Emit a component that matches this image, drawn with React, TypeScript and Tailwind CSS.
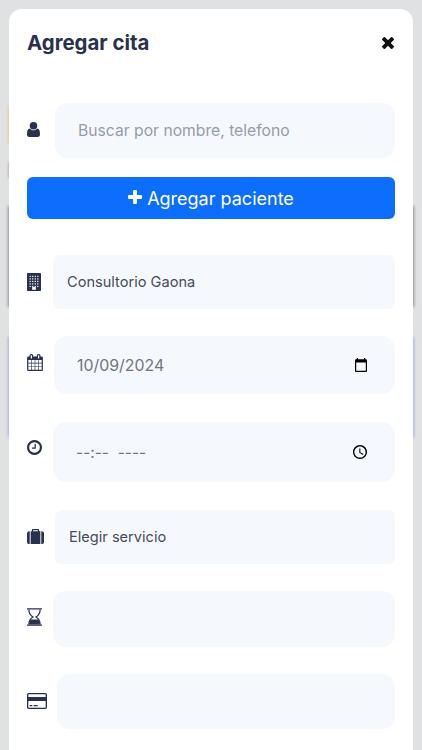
import React from 'react';
import clsx from 'clsx';

type IconProps = { className?: string };

function UserIcon({ className }: IconProps) {
  return (
    <svg viewBox="0 0 13 15" fill="currentColor" className={className}>
      <path d="M2.9 6.4C3.8 7.6 5.1 8.2 6.500 8.200s2.700-.6 3.600-1.800C12.300 6.600 13 8.600 13 12.200 13 14 12.100 15 10.700 15H2.300C.9 15 0 14 0 12.200 0 8.600.7 6.600 2.900 6.400z" />
      <circle cx="6.5" cy="3.8" r="3.8" />
    </svg>
  );
}

function PlusIcon({ className }: IconProps) {
  return (
    <svg viewBox="192 128 1408 1408" fill="currentColor" className={className}>
      <path d="M1600 736v192q0 40-28 68t-68 28h-416v416q0 40-28 68t-68 28h-192q-40 0-68-28t-28-68v-416h-416q-40 0-68-28t-28-68v-192q0-40 28-68t68-28h416v-416q0-40 28-68t68-28h192q40 0 68 28t28 68v416h416q40 0 68 28t28 68z" />
    </svg>
  );
}

function CloseIcon({ className }: IconProps) {
  return (
    <svg viewBox="302 366 1188 1188" fill="currentColor" className={className}>
      <path d="M1490 1322q0 40-28 68l-136 136q-28 28-68 28t-68-28l-294-294-294 294q-28 28-68 28t-68-28l-136-136q-28-28-28-68t28-68l294-294-294-294q-28-28-28-68t28-68l136-136q28-28 68-28t68 28l294 294 294-294q28-28 68-28t68 28l136 136q28 28 28 68t-28 68l-294 294 294 294q28 28 28 68z" />
    </svg>
  );
}

function BuildingIcon({ className }: IconProps) {
  const rows = [256, 512, 768, 1024, 1280];
  const cols = [256, 512, 768, 1024];
  return (
    <svg viewBox="0 0 1408 1792" className={className}>
      <rect width="1408" height="1792" rx="64" fill="currentColor" />
      {rows.map((y) =>
        cols.map((x) => (
          <rect key={`${x}-${y}`} x={x} y={y} width="128" height="128" rx="32" fill="#fff" />
        ))
      )}
      <rect x="512" y="1408" width="384" height="256" rx="32" fill="#fff" />
    </svg>
  );
}

function CalendarIcon({ className }: IconProps) {
  return (
    <svg viewBox="64 0 1664 1792" fill="currentColor" className={className}>
      <path d="M192 1664h288v-288h-288v288zm352 0h320v-288h-320v288zm-352-352h288v-320h-288v320zm352 0h320v-320h-320v320zm-352-384h288v-288h-288v288zm736 736h320v-288h-320v288zm-384-736h320v-288h-320v288zm768 736h288v-288h-288v288zm-384-352h320v-320h-320v320zm-352-864v-288q0-13-9.5-22.5t-22.5-9.5h-64q-13 0-22.5 9.5t-9.5 22.5v288q0 13 9.5 22.5t22.5 9.5h64q13 0 22.5-9.5t9.5-22.5zm736 864h288v-320h-288v320zm-384-384h320v-288h-320v288zm384 0h288v-288h-288v288zm32-480v-288q0-13-9.5-22.5t-22.5-9.5h-64q-13 0-22.5 9.5t-9.5 22.5v288q0 13 9.5 22.5t22.5 9.5h64q13 0 22.5-9.5t9.5-22.5zm384-64v1280q0 52-38 90t-90 38h-1408q-52 0-90-38t-38-90v-1280q0-52 38-90t90-38h128v-96q0-66 47-113t113-47h64q66 0 113 47t47 113v96h384v-96q0-66 47-113t113-47h64q66 0 113 47t47 113v96h128q52 0 90 38t38 90z" />
    </svg>
  );
}

function ClockIcon({ className }: IconProps) {
  return (
    <svg viewBox="128 128 1536 1536" fill="currentColor" className={className}>
      <path d="M1024 544v448q0 14-9 23t-23 9h-320q-14 0-23-9t-9-23v-64q0-14 9-23t23-9h224v-352q0-14 9-23t23-9h64q14 0 23 9t9 23zm416 352q0-148-73-273t-198-198-273-73-273 73-198 198-73 273 73 273 198 198 273 73 273-73 198-198 73-273zm224 0q0 209-103 385.5t-279.5 279.5-385.5 103-385.5-103-279.5-279.5-103-385.5 103-385.5 279.5-279.5 385.5-103 385.5 103 279.5 279.5 103 385.5z" />
    </svg>
  );
}

function SuitcaseIcon({ className }: IconProps) {
  return (
    <svg viewBox="0 0 1792 1664" fill="currentColor" preserveAspectRatio="none" className={className}>
      <path d="M640 256h512v-128h-512v128zm-352 0v1408h-64q-92 0-158-66t-66-158v-960q0-92 66-158t158-66h64zm1120 0v1408h-1024v-1408h128v-160q0-40 28-68t68-28h576q40 0 68 28t28 68v160h128zm384 224v960q0 92-66 158t-158 66h-64v-1408h64q92 0 158 66t66 158z" />
    </svg>
  );
}

function HourglassIcon({ className }: IconProps) {
  return (
    <svg viewBox="0 0 1536 1792" className={className}>
      <path
        d="M192 128C192 520 400 770 610 896C400 1022 192 1272 192 1664M1344 128C1344 520 1136 770 926 896C1136 1022 1344 1272 1344 1664"
        fill="none"
        stroke="currentColor"
        strokeWidth="128"
      />
      <path d="M380 1152h776q130 200 188 512h-1152q58-312 188-512z" fill="currentColor" />
      <rect width="1536" height="140" rx="32" fill="currentColor" />
      <rect y="1652" width="1536" height="140" rx="32" fill="currentColor" />
    </svg>
  );
}

function CreditCardIcon({ className }: IconProps) {
  return (
    <svg viewBox="0 0 1920 1536" fill="currentColor" className={className}>
      <path
        fillRule="evenodd"
        d="M160 0h1600q66 0 113 47t47 113v1216q0 66-47 113t-113 47h-1600q-66 0-113-47t-47-113v-1216q0-66 47-113t113-47zM160 128q-13 0-22.5 9.5t-9.5 22.5v224h1664v-224q0-13-9.5-22.5t-22.5-9.5zM128 768v608q0 13 9.5 22.5t22.5 9.5h1600q13 0 22.5-9.5t9.5-22.5v-608z"
      />
      <path d="M256 1152h256v128h-256zM640 1152h384v128h-384z" />
    </svg>
  );
}

function DatePickerIcon({ className }: IconProps) {
  return (
    <svg viewBox="2 1 20 22" fill="currentColor" preserveAspectRatio="none" className={className}>
      <path d="M20 3h-1V1h-2v2H7V1H5v2H4c-1.1 0-2 .9-2 2v16c0 1.1.9 2 2 2h16c1.1 0 2-.9 2-2V5c0-1.1-.9-2-2-2zm0 18H4V8h16v13z" />
    </svg>
  );
}

function TimePickerIcon({ className }: IconProps) {
  return (
    <svg viewBox="2 2 20 20" fill="currentColor" className={className}>
      <path d="M11.99 2C6.47 2 2 6.48 2 12s4.47 10 9.99 10C17.52 22 22 17.52 22 12S17.52 2 11.99 2zM12 20c-4.42 0-8-3.58-8-8s3.58-8 8-8 8 3.58 8 8-3.58 8-8 8zm.5-13H11v6l5.25 3.15.75-1.23-4.5-2.67z" />
    </svg>
  );
}

type FieldProps = {
  icon: React.ReactNode;
  // Width of the icon column, including the gap before the box
  iconClass: string;
  boxClass: string;
  className?: string;
  children?: React.ReactNode;
};

function Field({ icon, iconClass, boxClass, className, children }: FieldProps) {
  return (
    <div className={clsx('flex items-start text-[#2a314d]', className)}>
      <div className={clsx('shrink-0', iconClass)}>{icon}</div>
      <div className={clsx('flex flex-1 items-center justify-between bg-[#f5f9fd]', boxClass)}>
        {children}
      </div>
    </div>
  );
}

function App() {
  return (
    <div className="relative h-[750px] w-[422px] overflow-hidden bg-[#e0e1e3] font-['Inter',sans-serif]">
      {/* Page content dimmed behind the modal */}
      <div className="absolute left-2 top-[106px] h-[37px] w-3 bg-[#e6cb8c] blur-[1px]" />
      <div className="absolute left-2 top-[162px] h-4 w-3 bg-[#b5b6b8] blur-[1px]" />
      <div className="absolute left-2 top-[206px] h-[101px] w-[406px] bg-[#8b8d90] blur-[1.5px]" />
      <div className="absolute left-2 top-[337px] h-[100px] w-[406px] bg-[#a5abe6] blur-[1.5px]" />

      {/* Modal */}
      <div className="relative ml-[9px] mt-[9px] h-[760px] w-[404px] rounded-[13px] bg-white px-[18px]">
        <div className="flex h-[94px] items-start justify-between">
          <h1 className="mt-[19px] text-[20.4px] font-bold leading-[30px] text-[#2a314d]">Agregar cita</h1>
          <CloseIcon className="mr-px mt-7 size-3 text-[#111]" />
        </div>

        <Field
          icon={<UserIcon className="mt-[19px] h-[15px] w-[13px]" />}
          iconClass="w-[28px]"
          boxClass="h-[55px] rounded-[13px] px-[23px]"
        >
          <span className="text-[15.7px] text-[#989ba6]">Buscar por nombre, telefono</span>
        </Field>

        <button className="mt-[19px] flex h-[42px] w-full items-center justify-center gap-[5px] rounded-[6px] bg-[#0d6efd] text-[18px] text-white">
          <PlusIcon className="-mt-0.5 size-[14px]" />
          <span>Agregar paciente</span>
        </button>

        <Field
          className="mt-9"
          icon={<BuildingIcon className="mt-[18px] h-[18px] w-[14px]" />}
          iconClass="w-[26px]"
          boxClass="h-[54px] rounded-[6px] px-[14px]"
        >
          <span className="pt-0.5 text-[14.6px] text-[#474b5c]">Consultorio Gaona</span>
        </Field>

        <Field
          className="mt-[27px]"
          icon={<CalendarIcon className="mt-[18px] h-[17px] w-[16px]" />}
          iconClass="w-[27px]"
          boxClass="h-[58px] rounded-[13px] pl-[23px] pr-[27px]"
        >
          <span className="pt-0.5 text-[15.9px] text-[#71747d]">10/09/2024</span>
          <DatePickerIcon className="mr-px h-[14px] w-[12px] text-black" />
        </Field>

        <Field
          className="mt-7"
          icon={<ClockIcon className="mt-[18px] size-[15px]" />}
          iconClass="w-[26px]"
          boxClass="h-[60px] rounded-[13px] pl-[23px] pr-[28px]"
        >
          <span className="whitespace-pre pt-0.5 text-[15.5px] text-[#71747d]">--:--  ----</span>
          <TimePickerIcon className="size-[14px] text-black" />
        </Field>

        <Field
          className="mt-7"
          icon={<SuitcaseIcon className="mt-[19px] h-[15px] w-[17px]" />}
          iconClass="w-[28px]"
          boxClass="h-[54px] rounded-[6px] px-[14px]"
        >
          <span className="pt-0.5 text-[14.6px] text-[#474b5c]">Elegir servicio</span>
        </Field>

        <Field
          className="mt-[27px]"
          icon={<HourglassIcon className="mt-[17px] h-[18px] w-[15px]" />}
          iconClass="w-[26px]"
          boxClass="h-14 rounded-[13px]"
        />

        <Field
          className="mt-[27px]"
          icon={<CreditCardIcon className="mt-[19px] h-[16px] w-5" />}
          iconClass="w-[30px]"
          boxClass="h-[55px] rounded-[13px]"
        />
      </div>
    </div>
  );
}

export default App;
